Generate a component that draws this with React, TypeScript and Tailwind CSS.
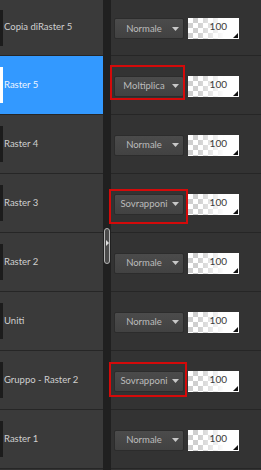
import React from "react";

type Layer = {
  name: string;
  mode: string;
  selected?: boolean;
  mark?: string;
};

const layers: Layer[] = [
  { name: "Copia diRaster 5", mode: "Normale" },
  {
    name: "Raster 5",
    mode: "Moltiplica",
    selected: true,
    mark: "-left-[4px] -right-[1px] -top-[11px] -bottom-[3px]",
  },
  { name: "Raster 4", mode: "Normale" },
  {
    name: "Raster 3",
    mode: "Sovrapponi",
    mark: "-left-[5px] -right-[4px] -top-[5px] -bottom-[9px]",
  },
  { name: "Raster 2", mode: "Normale" },
  { name: "Uniti", mode: "Normale" },
  {
    name: "Gruppo - Raster 2",
    mode: "Sovrapponi",
    mark: "-left-[5px] -right-[3px] -top-[9px] -bottom-[5px]",
  },
  { name: "Raster 1", mode: "Normale" },
];

function rowHeight(i: number) {
  return i === 0 ? "h-[56px]" : "h-[59px]";
}

function BlendSelect({ mode, mark }: { mode: string; mark?: string }) {
  return (
    <div className="relative">
      <div className="flex h-[21px] w-[70px] items-center rounded-[2px] border border-[#2c2c2c] bg-gradient-to-b from-[#4b4b4b] to-[#424242] pl-[4px] pr-[4px]">
        <span className="flex-1 text-center text-[9.5px] leading-none text-[#bcbcbc]">
          {mode}
        </span>
        <svg width="7" height="4" viewBox="0 0 7 4" className="ml-[3px]">
          <path d="M0 0h7L3.5 4z" fill="#c8c8c8" />
        </svg>
      </div>
      {mark && (
        <div
          className={`pointer-events-none absolute border-2 border-[#d40a0a] ${mark}`}
        />
      )}
    </div>
  );
}

function Opacity() {
  return (
    <div className="relative ml-[4px] h-[21px] w-[51px] bg-[linear-gradient(to_right,rgba(255,255,255,0)_20%,#fff_72%),conic-gradient(#cfcfcf_25%,#fff_0_50%,#cfcfcf_0_75%,#fff_0)] bg-[length:100%_100%,10px_10px]">
      <div className="pr-[12px] pt-[3px] text-right text-[10px] leading-none text-[#3a3a3a]">
        100
      </div>
      <svg
        width="5"
        height="5"
        viewBox="0 0 5 5"
        className="absolute bottom-[1px] right-[1px]"
      >
        <path d="M5 0v5H0z" fill="#111" />
      </svg>
    </div>
  );
}

export default function App() {
  return (
    <div
      className="flex h-[470px] w-[261px] overflow-hidden bg-[#333]"
      style={{ fontFamily: 'Lato, "Noto Sans", sans-serif' }}
    >
      {/* names */}
      <div className="flex w-[103px] flex-col">
        {layers.map((l, i) => (
          <div
            key={l.name}
            className={`flex shrink-0 items-center border-b border-[#262626] ${rowHeight(i)} ${
              l.selected ? "bg-[#3399ff]" : "bg-[#3a3a3a]"
            }`}
          >
            <div
              className={`h-[36px] w-[3px] ${l.selected ? "bg-white" : "bg-[#1c1c1c]"}`}
            />
            <span
              className={`ml-[1px] whitespace-nowrap text-[9.5px] ${
                l.selected ? "text-[#eef5ff]" : "text-[#cfcfcf]"
              }`}
            >
              {l.name}
            </span>
          </div>
        ))}
      </div>

      {/* splitter */}
      <div className="flex w-[8px] flex-col items-center bg-[#202020] pt-[228px]">
        <div className="flex h-[36px] w-[6px] items-center justify-center rounded-full border border-[#b5b5b5] bg-[#4a4a4a]">
          <svg width="3" height="6" viewBox="0 0 3 6" className="-mt-[6px]">
            <path d="M0 0l3 3-3 3z" fill="#e0e0e0" />
          </svg>
        </div>
      </div>

      {/* blend + opacity */}
      <div className="flex flex-1 flex-col">
        {layers.map((l, i) => (
          <div
            key={l.name}
            className={`flex shrink-0 items-center border-b border-[#262626] bg-[#333] pl-[3px] pt-[2px] ${rowHeight(i)}`}
          >
            <BlendSelect mode={l.mode} mark={l.mark} />
            <Opacity />
          </div>
        ))}
      </div>
    </div>
  );
}
